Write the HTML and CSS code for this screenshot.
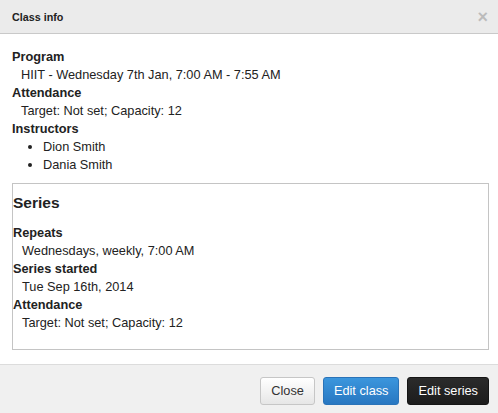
FILE: index.html
```html
<!DOCTYPE html>
<html>
<head>
<meta charset="utf-8">
<title>Class info</title>
<link rel="stylesheet" href="styles.css">
</head>
<body>
<div class="modal">
  <div class="modal-header">
    <h3 class="modal-title">Class info</h3>
    <button class="close" type="button">×</button>
  </div>
  <div class="modal-body">
    <dl class="info">
      <dt>Program</dt>
      <dd>HIIT - Wednesday 7th Jan, 7:00 AM - 7:55 AM</dd>
      <dt>Attendance</dt>
      <dd>Target: Not set; Capacity: 12</dd>
      <dt>Instructors</dt>
      <dd class="list-dd">
        <ul class="instructors">
          <li>Dion Smith</li>
          <li>Dania Smith</li>
        </ul>
      </dd>
    </dl>
    <div class="series">
      <h4 class="series-title">Series</h4>
      <dl class="info series-info">
        <dt>Repeats</dt>
        <dd>Wednesdays, weekly, 7:00 AM</dd>
        <dt>Series started</dt>
        <dd>Tue Sep 16th, 2014</dd>
        <dt>Attendance</dt>
        <dd>Target: Not set; Capacity: 12</dd>
      </dl>
    </div>
  </div>
  <div class="modal-footer">
    <button class="btn btn-default" type="button">Close</button>
    <button class="btn btn-primary" type="button">Edit class</button>
    <button class="btn btn-inverse" type="button">Edit series</button>
  </div>
</div>
</body>
</html>
```

FILE: styles.css
```css
html, body {
  margin: 0;
  padding: 0;
  background: #ffffff;
}

body {
  font-family: "Liberation Sans", Arial, Helvetica, sans-serif;
  font-size: 12.75px;
  color: #333333;
}

.modal {
  width: 498px;
  height: 413px;
  display: flex;
  flex-direction: column;
  background: #ffffff;
}

.modal-header {
  height: 33px;
  flex: 0 0 33px;
  display: flex;
  align-items: center;
  justify-content: space-between;
  padding: 0 10px 0 12px;
  background: #ebebeb;
  border-bottom: 1px solid #c9c9c9;
}

.modal-title {
  margin: 0;
  font-size: 10.75px;
  font-weight: bold;
  color: #222222;
  line-height: 14px;
}

.close {
  border: 0;
  background: none;
  padding: 0;
  margin: 0;
  font-family: "Liberation Sans", Arial, sans-serif;
  font-size: 18px;
  font-weight: bold;
  line-height: 18px;
  color: #000000;
  opacity: 0.2;
  cursor: pointer;
}

.modal-body {
  flex: 1 1 auto;
  padding: 14px 9px 14px 12px;
}

.info {
  margin: 0;
  line-height: 18px;
}

.info dt {
  font-weight: bold;
  color: #222222;
}

.info dd {
  margin: 0 0 0 9px;
  color: #222222;
}

.info dd.list-dd {
  margin-left: 0;
}

.instructors {
  margin: 0;
  padding-left: 31px;
  list-style: disc;
}

.series {
  margin-top: 9px;
  border: 1px solid #c4c4c4;
  padding: 0 0 17px 0;
}

.series-title {
  margin: 9px 0 11px 0;
  font-size: 15.5px;
  line-height: 20px;
  font-weight: bold;
  color: #222222;
}

.series-info dd {
  margin-left: 9px;
}

.modal-footer {
  flex: 0 0 48px;
  box-sizing: border-box;
  display: flex;
  justify-content: flex-end;
  align-items: flex-start;
  gap: 8px;
  padding: 12px 9px 8px 12px;
  background: #f0f0f0;
  border-top: 1px solid #dcdcdc;
}

.btn {
  box-sizing: border-box;
  height: 28px;
  padding: 0 10px;
  font-family: "Liberation Sans", Arial, sans-serif;
  font-size: 12.75px;
  line-height: 26px;
  border-radius: 3px;
  border: 1px solid transparent;
  cursor: pointer;
}

.btn-default {
  color: #333333;
  background: linear-gradient(#ffffff, #e6e6e6);
  border-color: #c6c6c6;
  box-shadow: inset 0 1px 0 rgba(255,255,255,0.3);
}

.btn-primary {
  color: #ffffff;
  background: linear-gradient(#3b96dd, #2877c1);
  border-color: #2a73b8;
}

.btn-inverse {
  color: #ffffff;
  background: linear-gradient(#2b2b2b, #1c1c1c);
  border-color: #151515;
}
```
